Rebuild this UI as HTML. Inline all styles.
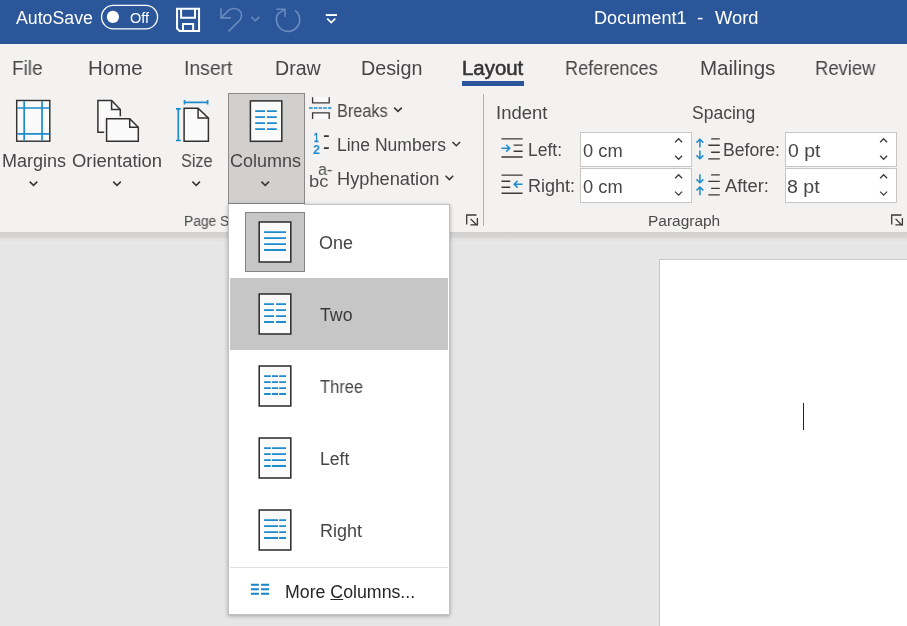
<!DOCTYPE html>
<html>
<head>
<meta charset="utf-8">
<title>Document1 - Word</title>
<style>
html,body{margin:0;padding:0;}
body{width:907px;height:626px;position:relative;overflow:hidden;background:#e6e6e6;font-family:"Liberation Sans",sans-serif;}
.abs{position:absolute;}
.titlebar{left:0;top:0;width:907px;height:44px;background:#2b579a;}
.tabrow{left:0;top:44px;width:907px;height:49px;background:#f3f2f1;}
.ribbon{left:0;top:93px;width:907px;height:139px;background:#f3f2f1;}
.ribshadow{left:0;top:232px;width:907px;height:6px;background:linear-gradient(#d0cfce,#d8d7d6);border-bottom:3px solid #e1e1e1;}
.page{left:659px;top:259px;width:260px;height:380px;background:#ffffff;border:1px solid #c8c8c8;}
.caret{left:803px;top:403px;width:1px;height:27px;background:#222;}
.colbtn{left:228px;top:93px;width:75px;height:109px;background:#d1d0cf;border:1px solid #8a8a8a;}
.inp{background:#fff;border:1px solid #c6c6c6;box-sizing:border-box;}
.sep{left:483px;top:94px;width:1px;height:132px;background:#b0aeab;}
.tabline{left:462px;top:81px;width:62px;height:5px;background:#2b579a;}
.t{position:absolute;white-space:nowrap;transform-origin:0 0;will-change:transform;font-family:"Liberation Sans",sans-serif;}
.drop{left:228px;top:204px;width:222px;height:411px;background:#fff;border:1px solid #c2c2c2;box-sizing:border-box;box-shadow:0 1px 4px rgba(0,0,0,0.3);}
.dsel{left:245px;top:212px;width:60px;height:60px;background:#c6c6c6;border:1px solid #848484;box-sizing:border-box;}
.dhov{left:230px;top:278px;width:218px;height:72px;background:#c6c6c6;}
.dsep{left:230px;top:567px;width:218px;height:1px;background:#e1dfdd;}
svg{position:absolute;left:0;top:0;}
</style>
</head>
<body>
<div class="abs titlebar"></div>
<div class="abs tabrow"></div>
<div class="abs ribbon"></div>
<div class="abs ribshadow"></div>
<div class="abs page"></div>
<div class="abs caret"></div>
<div class="abs tabline"></div>
<div class="abs colbtn"></div>
<div class="abs sep"></div>
<div class="abs inp" style="left:580px;top:132px;width:112px;height:35px;"></div>
<div class="abs inp" style="left:580px;top:168px;width:112px;height:35px;"></div>
<div class="abs inp" style="left:785px;top:132px;width:112px;height:35px;"></div>
<div class="abs inp" style="left:785px;top:168px;width:112px;height:35px;"></div>

<svg width="907" height="626" viewBox="0 0 907 626" fill="none">
<!-- title bar icons -->
<g stroke="#ffffff" stroke-width="1.3">
<rect x="101.55" y="5.4" width="56" height="23.4" rx="11.7"/>
<circle cx="112.9" cy="16.9" r="6.1" fill="#ffffff" stroke="none"/>
</g>
<g stroke="#ffffff" stroke-width="2" stroke-linejoin="miter">
<path d="M177.05 8.75 H199.07 V31 H179.6 L177.05 28.5 Z"/>
<path d="M181.1 8.75 V17.67 H195 V8.75"/>
<path d="M183 31 V24 H193.15 V31"/>
</g>
<g stroke="#6a8abf" stroke-width="1.6">
<path d="M221 8.3 V17.9 H231"/>
<path d="M221.3 17.6 L228.6 10.4 C231 8.2 235.6 7.6 238.7 9.9 C242.4 12.7 242.3 17.7 239.3 20.7 L228.4 31.4"/>
<path d="M251.3 16.8 L255.3 20.7 L259.4 16.8"/>
<path d="M276.3 9.2 H285 V16.8"/>
<path d="M295.1 10.3 A11.7 11.7 0 1 1 277.9 13.9 L284.8 9.4"/>
</g>
<g stroke="#ffffff">
<path d="M325.8 15.05 H337" stroke-width="1.9"/>
<path d="M327.2 18.7 L331.2 22.5 L335.3 18.7" stroke-width="1.7"/>
</g>

<!-- Margins icon -->
<rect x="16.7" y="100.5" width="33.1" height="40.7" fill="#fafafa" stroke="#333231" stroke-width="1.45"/>
<g stroke="#1e8bcd" stroke-width="1.7">
<path d="M24.2 101.2 V140.5 M42.05 101.2 V140.5 M17.4 108 H49.1 M17.4 133.9 H49.1"/>
</g>
<!-- Orientation icon -->
<path d="M97.9 100.6 H111.6 L120.3 109.6 V132.2 H97.9 Z" fill="#fafafa"/>
<g stroke="#333231" stroke-width="1.5" stroke-linecap="butt">
<path d="M104.6 132.2 H97.9 V100.6 H111.6 L120.3 109.6 V116.5"/>
<path d="M111.6 100.6 V109.6 H120.3"/>
</g>
<path d="M106.6 118.75 H129.7 L138.3 127.2 V141.2 H106.6 Z" fill="#f3f2f1" stroke="#f3f2f1" stroke-width="4.6"/>
<g stroke="#333231" stroke-width="1.5">
<path d="M106.6 118.75 H129.7 L138.3 127.2 V141.2 H106.6 Z" fill="#fafafa"/>
<path d="M129.7 118.75 V127.2 H138.3"/>
</g>
<!-- Size icon -->
<g stroke="#333231" stroke-width="1.5" fill="#fafafa">
<path d="M184.1 108.3 H198.1 L208.4 118.1 V141.2 H184.1 Z"/>
<path d="M198.1 108.3 V118.1 H208.4" fill="none"/>
</g>
<g stroke="#1e8bcd" stroke-width="1.7">
<path d="M183.7 102.3 H208.4 M184.5 100 V104.6 M207.6 100 V104.6"/>
<path d="M178.3 108 V141.3 M176 108.8 H180.8 M176 140.5 H180.8"/>
</g>
<!-- Columns icon -->
<rect x="250.4" y="100.9" width="31.4" height="40.4" fill="#fafafa" stroke="#2f2f2f" stroke-width="1.5"/>
<g stroke="#1e8bcd" stroke-width="1.7">
<path d="M255.2 111.1 H265 M267 111.1 H276.8 M255.2 117.1 H265 M267 117.1 H276.8 M255.2 123.1 H265 M267 123.1 H276.8 M255.2 129.1 H265 M267 129.1 H276.8"/>
</g>
<!-- big button chevrons -->
<g stroke="#353535" stroke-width="1.5">
<path d="M29.7 181.6 L33.5 185.4 L37.3 181.6"/>
<path d="M113.2 181.6 L117 185.4 L120.8 181.6"/>
<path d="M192.4 181.6 L196.2 185.4 L200 181.6"/>
<path d="M261.4 181.6 L265.2 185.4 L269 181.6"/>
<path d="M394.2 107.6 L398 111.4 L401.8 107.6"/>
<path d="M452.5 142 L456.3 145.8 L460.1 142"/>
<path d="M445.6 175.8 L449.4 179.6 L453.2 175.8"/>
</g>
<!-- Breaks icon -->
<g stroke="#3b3a39" stroke-width="1.35" fill="#fafafa">
<path d="M312.6 97.2 V102.8 H329.2 V97.2"/>
<path d="M312.6 119 V112.9 H329.2 V119"/>
</g>
<path d="M309.1 108 H332" stroke="#1e8bcd" stroke-width="1.6" stroke-dasharray="3.6 1.1"/>
<!-- Line numbers dashes -->
<path d="M323.9 136.1 H328.8 M323.9 148.1 H328.8" stroke="#333333" stroke-width="1.8"/>
<!-- dialog launchers -->
<g stroke="#3b3a39" stroke-width="1.3">
<path d="M466.7 224.6 V215 H476.5"/>
<path d="M470.6 218.9 L477 225.3 M470.4 224.9 H477.4 V218.1"/>
<path d="M891.7 224.6 V215 H901.5"/>
<path d="M895.6 218.9 L902 225.3 M895.4 224.9 H902.4 V218.1"/>
</g>
<!-- indent icons -->
<g stroke="#3b3a39" stroke-width="1.35">
<path d="M501.5 138.8 H522.6 M513.6 145.1 H522.6 M513.6 151.2 H522.6 M501.5 157 H522.6"/>
<path d="M501.5 175.1 H522.6 M501.5 181.2 H510.2 M501.5 187.2 H510.2 M501.5 193.2 H522.6"/>
<path d="M711.1 138.8 H719.8 M708.3 145.2 H719.8 M711.1 152.2 H719.8 M708.3 158.8 H719.8"/>
<path d="M711.1 174.9 H719.8 M708.3 181.3 H719.8 M711.1 188.3 H719.8 M708.3 194.9 H719.8"/>
</g>
<g stroke="#1e8bcd" stroke-width="1.5">
<path d="M501.5 148.2 H509.6 M506.3 144.8 L509.7 148.2 L506.3 151.6"/>
<path d="M522.6 184.2 H514.2 M517.6 180.8 L514.2 184.2 L517.6 187.6"/>
<path d="M699.9 139.2 V147.4 M696.5 142.6 L699.9 139.2 L703.3 142.6 M699.9 150.5 V158.8 M696.5 155.4 L699.9 158.8 L703.3 155.4"/>
<path d="M699.9 174.2 V182.8 M696.5 179.4 L699.9 182.8 L703.3 179.4 M699.9 195.3 V187 M696.5 190.4 L699.9 187 L703.3 190.4"/>
</g>
<!-- spinner chevrons -->
<g stroke="#3b3a39" stroke-width="1.25">
<path d="M675.1 142.2 L678.6 138.7 L682.1 142.2 M675.1 155.8 L678.6 159.3 L682.1 155.8"/>
<path d="M675.1 178.2 L678.6 174.7 L682.1 178.2 M675.1 191.6 L678.6 195.1 L682.1 191.6"/>
<path d="M880.1 142.2 L883.6 138.7 L887.1 142.2 M880.1 155.8 L883.6 159.3 L887.1 155.8"/>
<path d="M880.1 178.2 L883.6 174.7 L887.1 178.2 M880.1 191.6 L883.6 195.1 L887.1 191.6"/>
</g>
</svg>
<span class="t" style="left:16.13px;top:10.49px;font-size:17.5px;line-height:17.5px;color:#ffffff;font-weight:400;transform:scale(1.0130,1)">AutoSave</span>
<span class="t" style="left:129.96px;top:11.45px;font-size:14px;line-height:14px;color:#ffffff;font-weight:400;transform:scale(1.0350,1)">Off</span>
<span class="t" style="left:593.83px;top:10.49px;font-size:17.5px;line-height:17.5px;color:#ffffff;font-weight:400;transform:scale(1.0344,1)">Document1</span>
<span class="t" style="left:697.23px;top:10.49px;font-size:17.5px;line-height:17.5px;color:#ffffff;font-weight:400;transform:scale(1.0902,1)">-</span>
<span class="t" style="left:714.73px;top:10.49px;font-size:17.5px;line-height:17.5px;color:#ffffff;font-weight:400;transform:scale(1.0468,1)">Word</span>
<span class="t" style="left:12.02px;top:58.71px;font-size:19.6px;line-height:19.6px;color:#464646;font-weight:400;transform:scale(0.9699,1)">File</span>
<span class="t" style="left:88.00px;top:58.71px;font-size:19.6px;line-height:19.6px;color:#464646;font-weight:400;transform:scale(1.0450,1)">Home</span>
<span class="t" style="left:183.63px;top:58.71px;font-size:19.6px;line-height:19.6px;color:#464646;font-weight:400;transform:scale(0.9875,1)">Insert</span>
<span class="t" style="left:274.67px;top:58.71px;font-size:19.6px;line-height:19.6px;color:#464646;font-weight:400;transform:scale(0.9959,1)">Draw</span>
<span class="t" style="left:360.88px;top:58.71px;font-size:19.6px;line-height:19.6px;color:#464646;font-weight:400;transform:scale(1.0075,1)">Design</span>
<span class="t" style="left:461.90px;top:58.71px;font-size:19.6px;line-height:19.6px;color:#333333;font-weight:400;-webkit-text-stroke:0.55px #333333;transform:scale(1.0413,1)">Layout</span>
<span class="t" style="left:565.08px;top:58.71px;font-size:19.6px;line-height:19.6px;color:#464646;font-weight:400;transform:scale(0.9244,1)">References</span>
<span class="t" style="left:700.13px;top:58.71px;font-size:19.6px;line-height:19.6px;color:#464646;font-weight:400;transform:scale(1.0484,1)">Mailings</span>
<span class="t" style="left:815.09px;top:58.71px;font-size:19.6px;line-height:19.6px;color:#464646;font-weight:400;transform:scale(0.9407,1)">Review</span>
<span class="t" style="left:2.05px;top:153.49px;font-size:17.5px;line-height:17.5px;color:#464646;font-weight:400;transform:scale(1.0288,1)">Margins</span>
<span class="t" style="left:72.37px;top:153.49px;font-size:17.5px;line-height:17.5px;color:#464646;font-weight:400;transform:scale(1.0523,1)">Orientation</span>
<span class="t" style="left:181.28px;top:153.49px;font-size:17.5px;line-height:17.5px;color:#464646;font-weight:400;transform:scale(0.9282,1)">Size</span>
<span class="t" style="left:230.38px;top:153.49px;font-size:17.5px;line-height:17.5px;color:#464646;font-weight:400;transform:scale(1.0282,1)">Columns</span>
<span class="t" style="left:337.33px;top:103.49px;font-size:17.5px;line-height:17.5px;color:#464646;font-weight:400;transform:scale(0.9299,1)">Breaks</span>
<span class="t" style="left:337.19px;top:137.49px;font-size:17.5px;line-height:17.5px;color:#464646;font-weight:400;transform:scale(0.9962,1)">Line Numbers</span>
<span class="t" style="left:337.00px;top:171.49px;font-size:17.5px;line-height:17.5px;color:#464646;font-weight:400;transform:scale(1.0422,1)">Hyphenation</span>
<span class="t" style="left:495.99px;top:105.49px;font-size:17.5px;line-height:17.5px;color:#464646;font-weight:400;transform:scale(1.0545,1)">Indent</span>
<span class="t" style="left:692.05px;top:105.49px;font-size:17.5px;line-height:17.5px;color:#464646;font-weight:400;transform:scale(0.9981,1)">Spacing</span>
<span class="t" style="left:528.20px;top:142.49px;font-size:17.5px;line-height:17.5px;color:#464646;font-weight:400;transform:scale(0.9920,1)">Left:</span>
<span class="t" style="left:528.06px;top:178.49px;font-size:17.5px;line-height:17.5px;color:#464646;font-weight:400;transform:scale(1.0294,1)">Right:</span>
<span class="t" style="left:723.16px;top:142.49px;font-size:17.5px;line-height:17.5px;color:#464646;font-weight:400;transform:scale(1.0093,1)">Before:</span>
<span class="t" style="left:724.65px;top:178.49px;font-size:17.5px;line-height:17.5px;color:#464646;font-weight:400;transform:scale(1.0490,1)">After:</span>
<span class="t" style="left:582.56px;top:143.49px;font-size:17.5px;line-height:17.5px;color:#464646;font-weight:400;transform:scale(1.0449,1)">0 cm</span>
<span class="t" style="left:582.56px;top:179.49px;font-size:17.5px;line-height:17.5px;color:#464646;font-weight:400;transform:scale(1.0449,1)">0 cm</span>
<span class="t" style="left:788.22px;top:143.49px;font-size:17.5px;line-height:17.5px;color:#464646;font-weight:400;transform:scale(1.1097,1)">0 pt</span>
<span class="t" style="left:786.91px;top:179.49px;font-size:17.5px;line-height:17.5px;color:#464646;font-weight:400;transform:scale(1.1212,1)">8 pt</span>
<span class="t" style="left:183.59px;top:212.62px;font-size:14.1px;line-height:14.1px;color:#4a4a4a;font-weight:400;transform:scale(0.9795,1.08)">Page Setup</span>
<span class="t" style="left:647.79px;top:212.62px;font-size:14.1px;line-height:14.1px;color:#4a4a4a;font-weight:400;transform:scale(1.0964,1.08)">Paragraph</span>
<span class="t" style="left:318.17px;top:160.74px;font-size:17.2px;line-height:17.2px;color:#505050;font-weight:400;transform:scale(0.9437,1)">a-</span>
<span class="t" style="left:309.40px;top:172.74px;font-size:17.2px;line-height:17.2px;color:#505050;font-weight:400;transform:scale(1.0649,1)">bc</span>
<span class="t" style="left:313.54px;top:130.70px;font-size:13.7px;line-height:13.7px;color:#1e8bcd;font-weight:700;-webkit-text-stroke:0.4px #1e8bcd;transform:scale(0.5872,1)">1</span>
<span class="t" style="left:313.10px;top:142.70px;font-size:13.7px;line-height:13.7px;color:#1e8bcd;font-weight:700;transform:scale(0.9176,1)">2</span>

<div class="abs drop"></div>
<div class="abs" style="left:229px;top:204px;width:75px;height:1px;background:#ffffff;"></div>
<div class="abs dsel"></div>
<div class="abs dhov"></div>
<div class="abs dsep"></div>
<svg width="907" height="626" viewBox="0 0 907 626" fill="none">
<g stroke="#2f2f2f" stroke-width="1.55" fill="#fafafa">
<rect x="259.2" y="222" width="31.6" height="40"/>
<rect x="259.2" y="294" width="31.6" height="40"/>
<rect x="259.2" y="366" width="31.6" height="40"/>
<rect x="259.2" y="438" width="31.6" height="40"/>
<rect x="259.2" y="510" width="31.6" height="40"/>
</g>
<g stroke="#1e8bcd" stroke-width="1.8">
<path d="M264.1 232.20 H286 M264.1 238.15 H286 M264.1 244.05 H286 M264.1 250.00 H286"/>
<path d="M264.1 304.20 H273.9 M276.05 304.20 H286 M264.1 310.15 H273.9 M276.05 310.15 H286 M264.1 316.05 H273.9 M276.05 316.05 H286 M264.1 322.00 H273.9 M276.05 322.00 H286"/>
<path d="M264.1 376.20 H270.8 M272 376.20 H278.1 M279.2 376.20 H286 M264.1 382.15 H270.8 M272 382.15 H278.1 M279.2 382.15 H286 M264.1 388.05 H270.8 M272 388.05 H278.1 M279.2 388.05 H286 M264.1 394.00 H270.8 M272 394.00 H278.1 M279.2 394.00 H286"/>
<path d="M264.1 448.20 H270.8 M272 448.20 H286 M264.1 454.15 H270.8 M272 454.15 H286 M264.1 460.05 H270.8 M272 460.05 H286 M264.1 466.00 H270.8 M272 466.00 H286"/>
<path d="M264.1 520.20 H278.1 M279.2 520.20 H286 M264.1 526.15 H278.1 M279.2 526.15 H286 M264.1 532.05 H278.1 M279.2 532.05 H286 M264.1 538.00 H278.1 M279.2 538.00 H286"/>
</g>
<g stroke="#1c84c8" stroke-width="2">
<path d="M250.9 584.7 H258.85 M261 584.7 H269.1 M250.9 589.25 H258.85 M261 589.25 H269.1 M250.9 593.8 H258.85 M261 593.8 H269.1"/>
</g>
</svg>
<span class="t" style="left:319.19px;top:235.49px;font-size:17.5px;line-height:17.5px;color:#464646;font-weight:400;transform:scale(1.0261,1)">One</span>
<span class="t" style="left:319.76px;top:307.49px;font-size:17.5px;line-height:17.5px;color:#3a3a3a;font-weight:400;transform:scale(1.0122,1)">Two</span>
<span class="t" style="left:319.90px;top:379.49px;font-size:17.5px;line-height:17.5px;color:#464646;font-weight:400;transform:scale(0.9412,1)">Three</span>
<span class="t" style="left:319.58px;top:451.49px;font-size:17.5px;line-height:17.5px;color:#464646;font-weight:400;transform:scale(1.0041,1)">Left</span>
<span class="t" style="left:320.00px;top:523.49px;font-size:17.5px;line-height:17.5px;color:#464646;font-weight:400;transform:scale(1.0276,1)">Right</span>
<span class="t" style="left:285.33px;top:584.49px;font-size:17.5px;line-height:17.5px;color:#262626;font-weight:400;transform:scale(1.0139,1)">More <u>C</u>olumns...</span>
</body>
</html>
